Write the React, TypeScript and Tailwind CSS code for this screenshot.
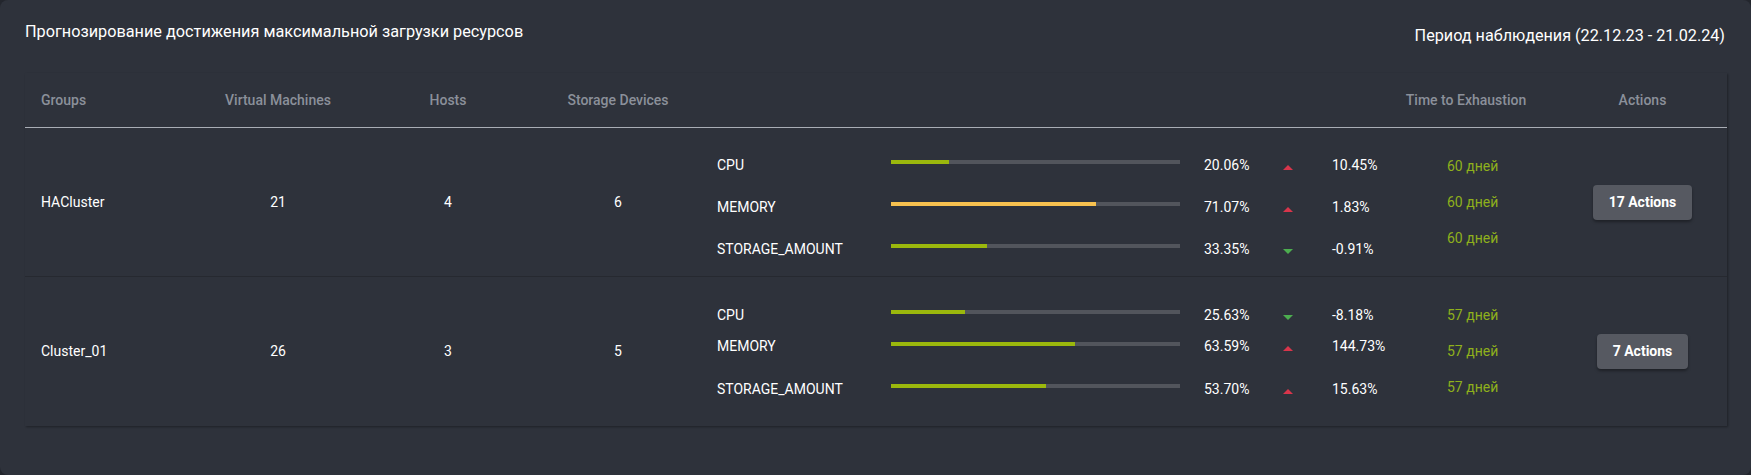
import React from 'react'

type Metric = {
  name: string
  usage: number
  change: string
  up: boolean
  barClass: string
  lineClass: string
}

type Group = {
  name: string
  vms: number
  hosts: number
  storage: number
  days: string
  actions: string
  stackClass: string
  metrics: Metric[]
}

const groups: Group[] = [
  {
    name: 'HACluster',
    vms: 21,
    hosts: 4,
    storage: 6,
    days: '60 дней',
    actions: '17 Actions',
    stackClass: 'pt-[16px]',
    metrics: [
      { name: 'CPU', usage: 20.06, change: '10.45%', up: true, barClass: 'bg-[#9bb80d]', lineClass: 'h-[42px]' },
      { name: 'MEMORY', usage: 71.07, change: '1.83%', up: true, barClass: 'bg-[#f7c14f]', lineClass: 'h-[42px]' },
      { name: 'STORAGE_AMOUNT', usage: 33.35, change: '-0.91%', up: false, barClass: 'bg-[#9bb80d]', lineClass: 'h-[42px]' },
    ],
  },
  {
    name: 'Cluster_01',
    vms: 26,
    hosts: 3,
    storage: 5,
    days: '57 дней',
    actions: '7 Actions',
    stackClass: 'pt-[28px]',
    metrics: [
      { name: 'CPU', usage: 25.63, change: '-8.18%', up: false, barClass: 'bg-[#9bb80d]', lineClass: 'h-[20px]' },
      { name: 'MEMORY', usage: 63.59, change: '144.73%', up: true, barClass: 'bg-[#9bb80d]', lineClass: 'h-[43px]' },
      { name: 'STORAGE_AMOUNT', usage: 53.7, change: '15.63%', up: true, barClass: 'bg-[#9bb80d]', lineClass: 'h-[42px]' },
    ],
  },
]

function Arrow({ up }: { up: boolean }) {
  return (
    <svg width="10" height="5" viewBox="0 0 10 5" className="mt-[4px]">
      {up ? (
        <polygon points="5,0 10,5 0,5" fill="#d8354b" />
      ) : (
        <polygon points="0,0 10,0 5,5" fill="#4cae4f" />
      )}
    </svg>
  )
}

function MetricLine({ metric }: { metric: Metric }) {
  return (
    <div className={`flex items-center ${metric.lineClass}`}>
      <span className="w-[174px] shrink-0">{metric.name}</span>
      <div className="mb-[6px] h-[4px] w-[289px] shrink-0 bg-[#52555c]">
        <div
          className={`h-full ${metric.barClass}`}
          style={{ width: `${metric.usage}%` }}
        />
      </div>
      <span className="ml-[24px] w-[79px] shrink-0">{metric.usage.toFixed(2)}%</span>
      <Arrow up={metric.up} />
      <span className="ml-[39px]">{metric.change}</span>
    </div>
  )
}

export default function App() {
  return (
    <div className="h-[475px] w-[1751px] bg-[#23262d] font-['Roboto',sans-serif] text-white">
      <div className="h-full rounded-lg bg-[#2e323b] px-[25px] pt-[20px]">
        <div className="flex items-start justify-between">
          <h2 className="text-[16.25px] leading-6">
            Прогнозирование достижения максимальной загрузки ресурсов
          </h2>
          <span className="mt-[4px] mr-[1px] text-[16.2px] leading-6">
            Период наблюдения (22.12.23 - 21.02.24)
          </span>
        </div>

        <div className="mt-[25px] w-[1702px] bg-[#2e323b] text-[14px] shadow-[1px_1px_2px_rgba(0,0,0,0.35)]">
          <div className="flex h-[55px] items-center border-b border-[#a9adb5] font-medium text-[#8b909a]">
            <div className="w-[168px] pl-4">Groups</div>
            <div className="w-[170px] text-center">Virtual Machines</div>
            <div className="w-[170px] text-center">Hosts</div>
            <div className="w-[170px] text-center">Storage Devices</div>
            <div className="flex-1" />
            <div className="w-[168px] pr-4 text-center">Time to Exhaustion</div>
            <div className="w-[169px] text-center">Actions</div>
          </div>

          {groups.map((g, i) => (
            <div
              key={g.name}
              className={`flex h-[149px] items-center ${i === 0 ? 'border-b border-[#262930]' : ''}`}
            >
              <div className="w-[168px] pl-4">{g.name}</div>
              <div className="w-[170px] text-center">{g.vms}</div>
              <div className="w-[170px] text-center">{g.hosts}</div>
              <div className="w-[170px] text-center">{g.storage}</div>
              <div className={`flex flex-1 flex-col self-start pl-[14px] ${g.stackClass}`}>
                {g.metrics.map((m) => (
                  <MetricLine key={m.name} metric={m} />
                ))}
              </div>
              <div className="flex w-[168px] flex-col gap-[15px] pl-[57px] text-[#8fb01c]">
                {g.metrics.map((m) => (
                  <span key={m.name}>{g.days}</span>
                ))}
              </div>
              <div className="flex w-[169px] justify-center">
                <button className="h-[35px] rounded bg-[#565961] px-4 font-bold text-white shadow-[0_2px_3px_rgba(0,0,0,0.35)]">
                  {g.actions}
                </button>
              </div>
            </div>
          ))}
        </div>
      </div>
    </div>
  )
}
